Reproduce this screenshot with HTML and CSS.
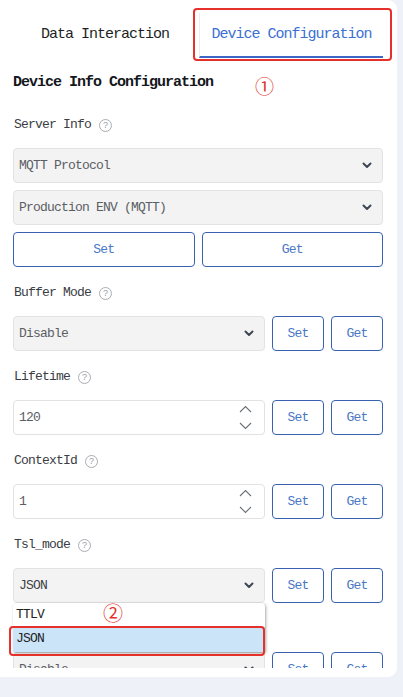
FILE: index.html
```html
<!DOCTYPE html>
<html>
<head>
<meta charset="utf-8">
<link rel="stylesheet" href="styles.css">
</head>
<body>
<div class="card">
  <div class="viewport">
    <div class="tabs">
      <div class="tab">Data Interaction</div>
      <div class="tab active">Device Configuration<span class="mark mark-tab"></span></div>
    </div>
    <div class="content">
      <div class="title">Device Info Configuration<span class="num num-1">①</span></div>

      <div class="field first">
        <div class="label">Server Info<span class="help">?</span></div>
        <div class="stack">
          <div class="select"><span>MQTT Protocol</span><svg class="chev" width="10" height="7" viewBox="0 0 10 7"><path d="M1.5 1.5 L5 5 L8.5 1.5" fill="none" stroke="#3f4653" stroke-width="2" stroke-linecap="round" stroke-linejoin="round"/></svg></div>
          <div class="select"><span>Production ENV (MQTT)</span><svg class="chev" width="10" height="7" viewBox="0 0 10 7"><path d="M1.5 1.5 L5 5 L8.5 1.5" fill="none" stroke="#3f4653" stroke-width="2" stroke-linecap="round" stroke-linejoin="round"/></svg></div>
          <div class="btns"><div class="btn">Set</div><div class="btn">Get</div></div>
        </div>
      </div>

      <div class="field">
        <div class="label">Buffer Mode<span class="help">?</span></div>
        <div class="row">
          <div class="select"><span>Disable</span><svg class="chev" width="10" height="7" viewBox="0 0 10 7"><path d="M1.5 1.5 L5 5 L8.5 1.5" fill="none" stroke="#3f4653" stroke-width="2" stroke-linecap="round" stroke-linejoin="round"/></svg></div>
          <div class="btn">Set</div><div class="btn">Get</div>
        </div>
      </div>

      <div class="field">
        <div class="label">Lifetime<span class="help">?</span></div>
        <div class="row">
          <div class="input"><span>120</span>
            <div class="spin">
              <svg width="13" height="8" viewBox="0 0 13 8"><path d="M1 7 L6.5 1.5 L12 7" fill="none" stroke="#6b6f76" stroke-width="1.1"/></svg>
              <svg width="13" height="8" viewBox="0 0 13 8"><path d="M1 1 L6.5 6.5 L12 1" fill="none" stroke="#6b6f76" stroke-width="1.1"/></svg>
            </div>
          </div>
          <div class="btn">Set</div><div class="btn">Get</div>
        </div>
      </div>

      <div class="field">
        <div class="label">ContextId<span class="help">?</span></div>
        <div class="row">
          <div class="input"><span>1</span>
            <div class="spin">
              <svg width="13" height="8" viewBox="0 0 13 8"><path d="M1 7 L6.5 1.5 L12 7" fill="none" stroke="#6b6f76" stroke-width="1.1"/></svg>
              <svg width="13" height="8" viewBox="0 0 13 8"><path d="M1 1 L6.5 6.5 L12 1" fill="none" stroke="#6b6f76" stroke-width="1.1"/></svg>
            </div>
          </div>
          <div class="btn">Set</div><div class="btn">Get</div>
        </div>
      </div>

      <div class="field">
        <div class="label">Tsl_mode<span class="help">?</span></div>
        <div class="row">
          <div class="select open"><span class="dark">JSON</span><svg class="chev" width="10" height="7" viewBox="0 0 10 7"><path d="M1.5 1.5 L5 5 L8.5 1.5" fill="none" stroke="#3f4653" stroke-width="2" stroke-linecap="round" stroke-linejoin="round"/></svg>
            <div class="menu">
              <div class="opt">TTLV</div>
              <div class="opt sel">JSON<span class="mark mark-opt"></span></div>
              <span class="num num-2">②</span>
            </div>
          </div>
          <div class="btn">Set</div><div class="btn">Get</div>
        </div>
      </div>

      <div class="field">
        <div class="label">Buffer Mode<span class="help">?</span></div>
        <div class="row">
          <div class="select"><span>Disable</span><svg class="chev" width="10" height="7" viewBox="0 0 10 7"><path d="M1.5 1.5 L5 5 L8.5 1.5" fill="none" stroke="#3f4653" stroke-width="2" stroke-linecap="round" stroke-linejoin="round"/></svg></div>
          <div class="btn">Set</div><div class="btn">Get</div>
        </div>
      </div>
    </div>
  </div>
</div>
</body>
</html>
```
FILE: styles.css
```css
* { box-sizing: border-box; }
html, body { margin: 0; padding: 0; }
body {
  background: #eef1f7;
  width: 403px;
  height: 697px;
  overflow: hidden;
  font-family: "Liberation Mono", "DejaVu Sans Mono", monospace;
}
.card {
  width: 397px;
  height: 677px;
  background: #fff;
  border-radius: 0 9px 9px 0;
  padding-bottom: 9px;
}
.viewport {
  height: 668px;
  overflow: hidden;
  position: relative;
}
.tabs {
  display: flex;
  gap: 2px;
  padding: 13px 0 0 13px;
}
.tab {
  width: 184px;
  height: 45px;
  padding-top: 12px;
  line-height: 20px;
  text-align: center;
  font-size: 15px;
  letter-spacing: -1px;
  color: #1d1f24;
  border-bottom: 2px solid transparent;
  position: relative;
}
.tab.active {
  color: #3c6fd4;
  border-bottom-color: #3d66c6;
  border-left: 1px solid #ececec;
}
.mark {
  position: absolute;
  border: 2px solid #e5302c;
  border-radius: 4px;
  pointer-events: none;
}
.mark-tab { left: -7px; top: -5px; width: 199px; height: 53px; }
.content {
  padding: 0 14px 0 13px;
}
.title {
  margin-top: 14px;
  height: 20px;
  display: flex;
  align-items: center;
  font-size: 15px;
  letter-spacing: -1px;
  font-weight: bold;
  color: #15171c;
}
.num {
  color: #e5302c;
  font-family: "Noto Sans CJK SC", "DejaVu Sans", sans-serif;
  font-weight: normal;
  letter-spacing: 0;
  line-height: 1;
}
.num-1 { margin-left: 42px; font-size: 19px; position: relative; top: 3px; }
.field { margin-top: 16px; }
.field.first { margin-top: 23px; }
.label {
  height: 20px;
  line-height: 20px;
  font-size: 13px;
  letter-spacing: -0.8px;
  color: #3a3d44;
  display: flex;
  align-items: center;
  padding-left: 1px;
  margin-bottom: 13px;
}
.help {
  width: 13px;
  height: 13px;
  margin-left: 8px;
  border: 1px solid #a9acb2;
  border-radius: 50%;
  color: #9a9da3;
  font-family: "Liberation Sans", sans-serif;
  font-size: 9px;
  letter-spacing: 0;
  line-height: 11px;
  text-align: center;
}
.stack { display: flex; flex-direction: column; gap: 7px; }
.btns { display: grid; grid-template-columns: 1fr 1fr; gap: 7px; }
.row {
  display: grid;
  grid-template-columns: 1fr 52px 52px;
  gap: 7px;
}
.select, .input {
  height: 35px;
  border-radius: 4px;
  display: flex;
  align-items: center;
  justify-content: space-between;
  padding: 0 10px 0 5px;
  font-size: 13px;
  letter-spacing: -0.8px;
  color: #5b5e64;
  position: relative;
}
.select {
  background: #f3f3f3;
  border: 1px solid #e3e3e3;
}
.input {
  background: #fff;
  border: 1px solid #e2e2e2;
  padding-right: 12px;
}
.dark { color: #3d4047; }
.spin {
  display: flex;
  flex-direction: column;
  gap: 9px;
}
.spin svg { display: block; }
.btn {
  height: 35px;
  border: 1px solid #3862b0;
  border-radius: 4px;
  display: flex;
  align-items: center;
  justify-content: center;
  font-size: 13px;
  letter-spacing: -0.8px;
  color: #4a78c6;
}
.menu {
  position: absolute;
  left: -1px;
  top: 34px;
  width: 252px;
  background: #fff;
  border-radius: 4px 4px 0 0;
  box-shadow: 1px 1px 3px rgba(0,0,0,0.35);
  z-index: 5;
  color: #222;
}
.opt {
  height: 24px;
  line-height: 24px;
  padding-left: 3px;
  font-size: 13px;
  letter-spacing: -0.8px;
  position: relative;
}
.opt.sel {
  height: 25px;
  background: #cce4f8;
}
.mark-opt { left: -4px; top: -1px; width: 256px; height: 30px; }
.num-2 {
  position: absolute;
  left: 90px;
  top: -2px;
  font-size: 20px;
  line-height: 24px;
}
```
